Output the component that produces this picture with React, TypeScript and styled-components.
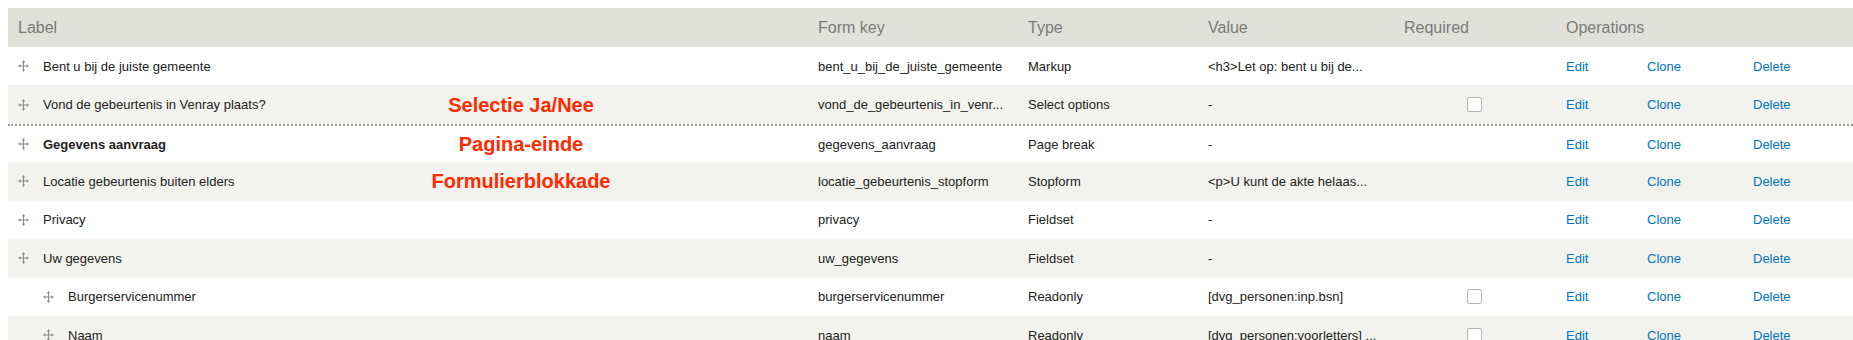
import styled, {createGlobalStyle} from "styled-components";

const GlobalStyle = createGlobalStyle`
    html, body {
        margin: 0;
        padding: 0;
        overflow: hidden;
        background: #ffffff;
    }
    body {
        padding: 8px 0 0 8px;
        font-family: "Liberation Sans", Arial, sans-serif;
        color: #222222;
    }
`

const COLUMNS = "800px 210px 180px 196px 162px 81px 106px 1fr";

const TableWrapper = styled.div`
    display: flex;
    flex-direction: column;
    width: calc(100vw - 8px);
`

const HeaderRow = styled.div`
    display: grid;
    grid-template-columns: ${COLUMNS};
    align-items: center;
    height: 39px;
    background-color: #e1e1dc;
`

const HeaderCell = styled.div<{ $span?: number }>`
    grid-column: span ${p => p.$span ?? 1};
    padding-left: 10px;
    font-size: 16px;
    color: #7a7a7a;
    white-space: nowrap;
`

const Row = styled.div<{ $striped?: boolean; $pageBreak?: boolean }>`
    display: grid;
    grid-template-columns: ${COLUMNS};
    align-items: center;
    box-sizing: border-box;
    height: 38.43px;
    flex-shrink: 0;
    background-color: ${p => (p.$striped ? "#f2f2ee" : "#ffffff")};
    border-top: ${p => (p.$pageBreak ? "2px dotted #9a9a9a" : "none")};
`

const Cell = styled.div`
    padding-left: 10px;
    font-size: 13px;
    white-space: nowrap;
    overflow: hidden;
`

const LabelCell = styled(Cell)<{ $indent: number }>`
    position: relative;
    overflow: visible;
    display: flex;
    align-items: center;
    gap: 14px;
    padding-left: ${p => 10 + p.$indent * 25}px;
`

const LabelText = styled.span<{ $bold?: boolean }>`
    font-weight: ${p => (p.$bold ? "bold" : "normal")};
`

const Annotation = styled.span`
    position: absolute;
    left: 513px;
    top: 50%;
    transform: translate(-50%, -50%);
    font-size: 20px;
    font-weight: bold;
    color: #ff2a00;
    white-space: nowrap;
`

const CheckBox = styled.span`
    display: block;
    box-sizing: border-box;
    width: 15px;
    height: 15px;
    margin-left: 63px;
    border: 1px solid #b4b4b4;
    border-radius: 2px;
    background: #ffffff;
`

const OpLink = styled.a`
    color: #0074bd;
    text-decoration: none;
    font-size: 13px;
`

function DragHandle() {
    return (
        <svg width="11" height="12" viewBox="0 0 11 12" style={{flexShrink: 0}}>
            <g fill="#8c8c8c">
                <rect x="5" y="2" width="1" height="8"/>
                <rect x="2" y="5.5" width="7" height="1"/>
                <polygon points="5.5,0 3.8,2.4 7.2,2.4"/>
                <polygon points="5.5,12 3.8,9.6 7.2,9.6"/>
                <polygon points="0,6 2.4,4.3 2.4,7.7"/>
                <polygon points="11,6 8.6,4.3 8.6,7.7"/>
            </g>
        </svg>
    )
}

type Element = {
    label: string;
    key: string;
    type: string;
    value: string;
    required?: boolean;
    indent?: number;
    bold?: boolean;
    pageBreak?: boolean;
    note?: string;
}

const elements: Element[] = [
    {label: "Bent u bij de juiste gemeente", key: "bent_u_bij_de_juiste_gemeente", type: "Markup", value: "<h3>Let op: bent u bij de..."},
    {label: "Vond de gebeurtenis in Venray plaats?", key: "vond_de_gebeurtenis_in_venr...", type: "Select options", value: "-", required: true, note: "Selectie Ja/Nee"},
    {label: "Gegevens aanvraag", key: "gegevens_aanvraag", type: "Page break", value: "-", bold: true, pageBreak: true, note: "Pagina-einde"},
    {label: "Locatie gebeurtenis buiten elders", key: "locatie_gebeurtenis_stopform", type: "Stopform", value: "<p>U kunt de akte helaas...", note: "Formulierblokkade"},
    {label: "Privacy", key: "privacy", type: "Fieldset", value: "-"},
    {label: "Uw gegevens", key: "uw_gegevens", type: "Fieldset", value: "-"},
    {label: "Burgerservicenummer", key: "burgerservicenummer", type: "Readonly", value: "[dvg_personen:inp.bsn]", required: true, indent: 1},
    {label: "Naam", key: "naam", type: "Readonly", value: "[dvg_personen:voorletters] ...", required: true, indent: 1},
]

function App() {
    return (
        <>
            <GlobalStyle/>
            <TableWrapper>
                <HeaderRow>
                    <HeaderCell>Label</HeaderCell>
                    <HeaderCell>Form key</HeaderCell>
                    <HeaderCell>Type</HeaderCell>
                    <HeaderCell>Value</HeaderCell>
                    <HeaderCell>Required</HeaderCell>
                    <HeaderCell $span={3}>Operations</HeaderCell>
                </HeaderRow>
                {elements.map((el, i) => (
                    <Row key={el.key} $striped={i % 2 === 1} $pageBreak={el.pageBreak}>
                        <LabelCell $indent={el.indent ?? 0}>
                            <DragHandle/>
                            <LabelText $bold={el.bold}>{el.label}</LabelText>
                            {el.note && <Annotation>{el.note}</Annotation>}
                        </LabelCell>
                        <Cell>{el.key}</Cell>
                        <Cell>{el.type}</Cell>
                        <Cell>{el.value}</Cell>
                        <Cell>{el.required && <CheckBox/>}</Cell>
                        <Cell><OpLink href="#">Edit</OpLink></Cell>
                        <Cell><OpLink href="#">Clone</OpLink></Cell>
                        <Cell><OpLink href="#">Delete</OpLink></Cell>
                    </Row>
                ))}
            </TableWrapper>
        </>
    )
}

export default App;
